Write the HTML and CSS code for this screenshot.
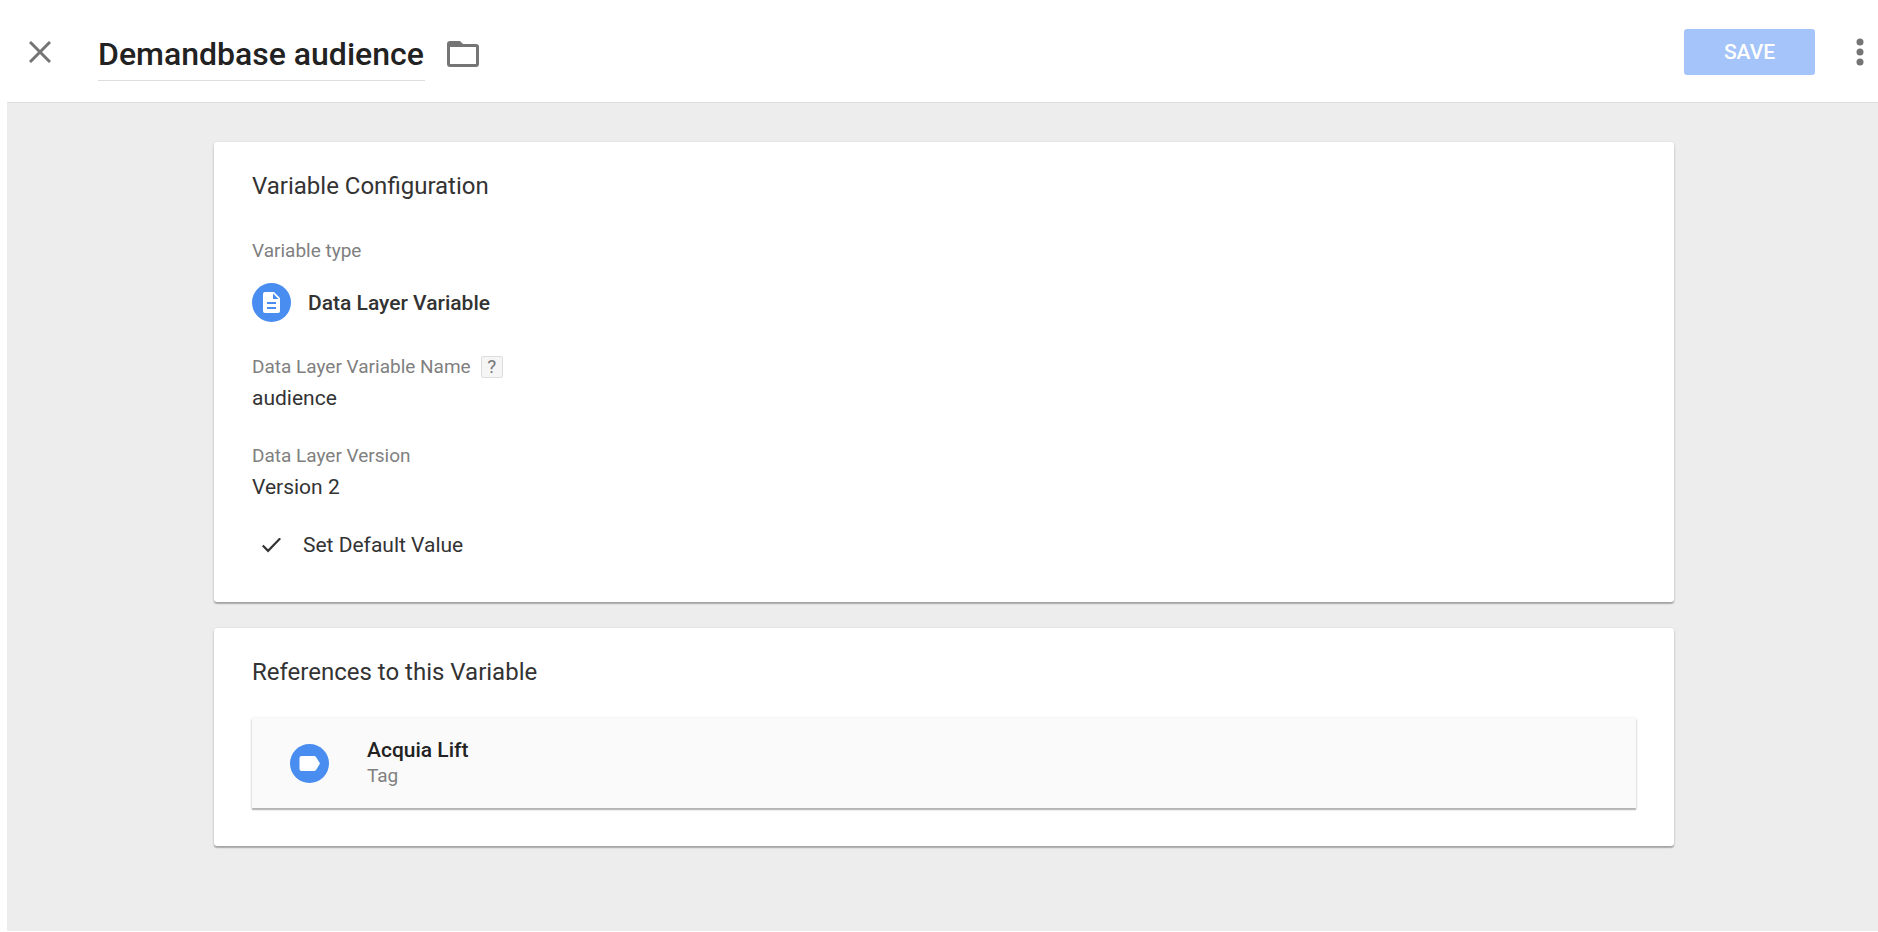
FILE: index.html
```html
<!DOCTYPE html>
<html lang="en">
<head>
    <meta charset="UTF-8">
    <meta name="viewport" content="width=device-width, initial-scale=1.0">
    <title>Demandbase audience</title>
    <link rel="stylesheet" href="styles.css">
</head>
<body>
    <header class="header">
        <button class="icon-button close" type="button" aria-label="Close">
            <svg width="22" height="22" viewBox="0 0 22 22"><path d="M1 1L21 21M21 1L1 21" fill="none" stroke="#757575" stroke-width="3"/></svg>
        </button>
        <input class="title" type="text" value="Demandbase audience" aria-label="Variable name">
        <button class="icon-button folder" type="button" aria-label="Move to folder">
            <svg width="32" height="26" viewBox="0 0 32 26"><path fill="#757575" fill-rule="evenodd" d="M3 0h10l3 3h13a3 3 0 0 1 3 3v17a3 3 0 0 1-3 3H3a3 3 0 0 1-3-3V3a3 3 0 0 1 3-3zM3 6v17h26V6z"/></svg>
        </button>
        <button class="save" type="button" disabled>SAVE</button>
        <button class="icon-button more" type="button" aria-label="More actions">
            <svg width="8" height="28" viewBox="0 0 8 28" fill="#757575"><circle cx="4" cy="4" r="3.500"/><circle cx="4" cy="14" r="3.500"/><circle cx="4" cy="24" r="3.500"/></svg>
        </button>
    </header>

    <main class="content">
        <section class="card config">
            <h2>Variable Configuration</h2>
            <div class="label">Variable type</div>
            <div class="type">
                <svg width="39" height="39" viewBox="0 0 39 39">
                    <circle cx="19.5" cy="19.5" r="19.5" fill="#4a8df0"/>
                    <path fill="#fff" d="M13 9h9l6 6v13a2 2 0 0 1-2 2H13a2 2 0 0 1-2-2V11a2 2 0 0 1 2-2z"/>
                    <path fill="#4a8df0" d="M21 10.500v5.500h5.500zM15 19h9v2h-9zM15 24h9v2h-9z"/>
                </svg>
                <span>Data Layer Variable</span>
            </div>
            <div class="field">
                <div class="label">Data Layer Variable Name <button class="help" type="button">?</button></div>
                <div class="value">audience</div>
            </div>
            <div class="field">
                <div class="label">Data Layer Version</div>
                <div class="value">Version 2</div>
            </div>
            <label class="check">
                <input type="checkbox" checked>
                Set Default Value
            </label>
        </section>

        <section class="card">
            <h2>References to this Variable</h2>
            <a class="reference" href="#">
                <svg width="39" height="39" viewBox="0 0 39 39">
                    <circle cx="19.5" cy="19.5" r="19.5" fill="#4a8df0"/>
                    <path fill="#fff" d="M11.500 12H24a2.500 2.500 0 0 1 2 1l4 6.500-4 6.500a2.500 2.500 0 0 1-2 1H11.500a2 2 0 0 1-2-2V14a2 2 0 0 1 2-2z"/>
                </svg>
                <span class="reference-text">
                    <strong>Acquia Lift</strong>
                    <span class="kind">Tag</span>
                </span>
            </a>
        </section>
    </main>
</body>
</html>
```

FILE: styles.css
```css
* {
    box-sizing: border-box;
}
body {
    display: flex;
    flex-direction: column;
    min-height: 100vh;
    margin: 0;
    padding: 0 0 1px 7px;
    background: #fff;
    color: #333;
    font-family: Roboto, sans-serif;
    font-size: 21px;
    line-height: 24px;
}
button, input {
    margin: 0;
    padding: 0;
    font-family: inherit;
}
svg {
    display: block;
    flex: none;
}

/* top bar */
.header {
    display: flex;
    align-items: center;
    height: 103px;
    padding: 2px 14px 0 22px;
    border-bottom: 1px solid #ddd;
}
.icon-button {
    border: none;
    background: none;
    cursor: pointer;
}
.title {
    width: 327px;
    height: 54px;
    margin: 4px 22px 0 47px;
    border: none;
    border-bottom: 1px solid #ddd;
    background: none;
    color: #222;
    font-size: 32px;
    font-weight: 500;
}
.folder {
    margin-top: 4px;
}
.save {
    width: 131px;
    height: 46px;
    margin-left: auto;
    border: none;
    border-radius: 3px;
    background: #a5c4f9;
    color: #fff;
    font-size: 21px;
    font-weight: 500;
}
.more {
    margin-left: 41px;
}

/* cards */
.content {
    flex: 1;
    padding: 39px 204px 40px 207px;
    background: #ededed;
}
.card {
    margin-bottom: 26px;
    padding: 30px 38px 38px;
    border-radius: 3px;
    background: #fff;
    box-shadow: 0 1px 3px rgba(0, 0, 0, 0.2), 0 2px 1px rgba(0, 0, 0, 0.2);
}
.config {
    padding-bottom: 45px;
}
h2 {
    margin: 0 0 32px;
    font-size: 24px;
    font-weight: 400;
    line-height: 28px;
}
.config h2 {
    margin-bottom: 39px;
}
.label {
    display: flex;
    align-items: center;
    gap: 10px;
    margin-bottom: 7px;
    color: #808080;
    font-size: 19px;
}
.type {
    display: flex;
    align-items: center;
    gap: 17px;
    margin: 20px 0 33px;
    font-weight: 500;
}
.field {
    margin-bottom: 34px;
}
.help {
    width: 22px;
    height: 22px;
    border: 1px solid #ddd;
    border-radius: 2px;
    background: #f5f5f5;
    color: #757575;
    font-size: 19px;
    line-height: 20px;
}
.check {
    display: flex;
    align-items: center;
    gap: 22px;
    padding-left: 10px;
}
.check input {
    width: 19px;
    height: 15px;
    appearance: none;
}
.check input:checked {
    background: #333;
    clip-path: polygon(32% 79%, 8% 48%, 0 58%, 32% 100%, 100% 10%, 92% 0);
}

/* references */
.reference {
    display: flex;
    align-items: center;
    gap: 38px;
    height: 90px;
    padding: 0 38px;
    background: #fafafa;
    color: #222;
    text-decoration: none;
    box-shadow: 0 1px 3px rgba(0, 0, 0, 0.2), 0 2px 1px rgba(0, 0, 0, 0.2);
}
.reference-text {
    display: flex;
    flex-direction: column;
    gap: 2px;
}
.reference strong {
    font-weight: 500;
}
.kind {
    color: #808080;
    font-size: 19px;
}
```
